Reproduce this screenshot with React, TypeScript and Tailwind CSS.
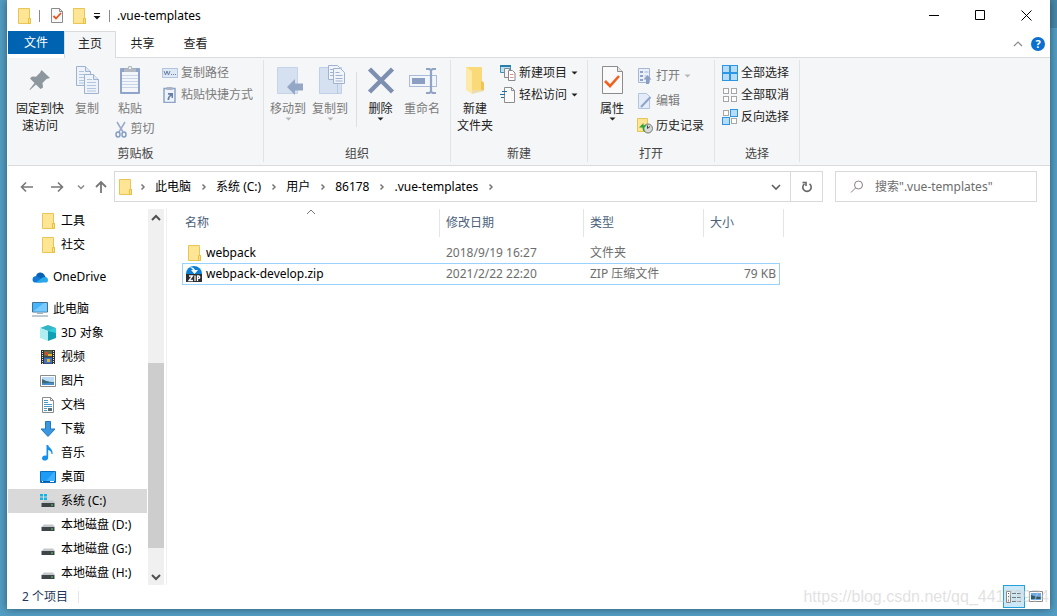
import React from 'react';

const FolderIcon = () => (
  <svg width="16" height="18" viewBox="0 0 16 18">
    <path d="M2.5 1.5h11v10h1v5h-12z" fill="#ffe594" stroke="#e8c555" />
    <path d="M12.5 11.5h2v5h-2z" fill="#ffe08a" stroke="#e8c040" />
  </svg>
);

const CheckDocIcon = () => (
  <svg width="14" height="17" viewBox="0 0 14 17">
    <path d="M1.5 1.5h8l3 3v11h-11z" fill="#f8f8f8" stroke="#8b8b8b" />
    <path d="M9.5 1.5v3h3" fill="none" stroke="#8b8b8b" />
    <path d="M3.5 9l2.5 2.5 5-5.500" fill="none" stroke="#e8541c" strokeWidth="1.800" />
  </svg>
);

const Caret = ({ color = '#222' }: { color?: string }) => (
  <svg width="7" height="4" viewBox="0 0 7 4">
    <path d="M0.5 0.5h6l-3 3z" fill={color} />
  </svg>
);

const Chevron = ({ d, w = 1.2, color = '#606060' }: { d: string; w?: number; color?: string }) => (
  <svg width="10" height="10" viewBox="0 0 10 10">
    <path d={d} fill="none" stroke={color} strokeWidth={w} />
  </svg>
);
const RIGHT = 'M3.5 2.5l2.500 2.500-2.500 2.500';
const UP = 'M1 7l4-4 4 4';
const DOWN = 'M1 3l4 4 4-4';

const PinIcon = () => (
  <svg width="32" height="32" viewBox="0 0 32 32">
    <path d="M17.5 6l8.5 8-3.5 1-4 4 .5 4.500-2.500 1.500-4.500-4.500-6 5.500-.5-.5 5-6.500-4.500-4.500 2-2 4 .2 4-4z" fill="#8c979e" />
  </svg>
);

const Page = ({ x, y }: { x: number; y: number }) => (
  <g transform={`translate(${x} ${y})`}>
    <path d="M.5.5h9l5 5v14h-14z" fill="#eef3fa" stroke="#9fb3d1" />
    <path d="M9.500.5v5h5" fill="#dfe8f4" stroke="#9fb3d1" />
    <path d="M3 5.500h5M3 8.500h9M3 11.500h9M3 14.500h9M3 17h9" stroke="#b3c4de" />
  </g>
);

const CopyIcon = () => (
  <svg width="32" height="32" viewBox="0 0 32 32">
    <Page x={5} y={2} />
    <Page x={13} y={10} />
  </svg>
);

const PasteIcon = () => (
  <svg width="32" height="32" viewBox="0 0 32 32">
    <rect x="6" y="4" width="20" height="26" rx="1" fill="#8fa4c8" />
    <rect x="8" y="8" width="16" height="20" fill="#f2f6fb" />
    <path d="M8 11.500h16M8 14.500h16M8 17.500h16M8 20.500h16M8 23.500h16" stroke="#c8d5e8" />
    <path d="M10 8V4.500h3.500L14.500 2h3l1 2.500H22V8z" fill="#b3b9c1" />
    <circle cx="16" cy="4" r="1" fill="#fff" />
  </svg>
);

const CutIcon = () => (
  <svg width="12" height="17" viewBox="0 0 12 17" fill="none">
    <path d="M2 1l6 10M10 1L4 11" stroke="#9badca" strokeWidth="1.600" />
    <ellipse cx="3" cy="13.500" rx="2" ry="2.500" stroke="#859dc4" strokeWidth="1.500" />
    <ellipse cx="9" cy="13.500" rx="2" ry="2.500" stroke="#859dc4" strokeWidth="1.500" />
  </svg>
);

const CopyPathIcon = () => (
  <svg width="16" height="16" viewBox="0 0 16 16">
    <rect x=".5" y="3.500" width="15" height="9" fill="#dfe8f5" stroke="#b4c4dd" />
    <path d="M2 6l1.500 4L5 6l1.500 4L8 6" fill="none" stroke="#6c81a8" />
    <path d="M9 9.500h1M11 9.500h1M13 9.500h1" stroke="#6c81a8" />
  </svg>
);

const PasteShortcutIcon = () => (
  <svg width="16" height="16" viewBox="0 0 16 16">
    <path d="M2 1.500h11v14H2z" fill="#eef3fa" stroke="#8fa4c8" strokeWidth="1.500" />
    <path d="M4.500 0h6v3h-6z" fill="#aab4c4" />
    <path d="M6 6h5v5H9.500V8.800C7.800 9.800 7.300 11 7.300 13H5.500c0-2.500 1-4 2.700-5.300H6z" fill="#647fac" />
  </svg>
);

const MoveIcon = () => (
  <svg width="32" height="32" viewBox="0 0 32 32">
    <path d="M5.500 3.500h20v26h-20z" fill="#d5e0f1" stroke="#c6d4ea" />
    <path d="M15 23l8-8v4.500h8v7h-8V31z" fill="#94a7c7" />
  </svg>
);

const CopyToIcon = () => (
  <svg width="32" height="32" viewBox="0 0 32 32">
    <path d="M5.500 3.500h22v26h-22z" fill="#d5e0f1" stroke="#c0cfe7" />
    <path d="M23.500 20v10" stroke="#b9c9e2" />
    <g transform="translate(14 1)" stroke="#9fb3d1" fill="#f1f5fb">
      <path d="M.5.5h9l2 2v12h-11z" />
      <path d="M2 4.500h6M2 7.500h6M2 10.500h6" />
      <path d="M5.500 3.500h7l4 4v11h-11z" />
      <path d="M7.500 7.500h4M7.500 10.500h7M7.500 13.500h7M7.500 16h7" />
    </g>
  </svg>
);

const DeleteIcon = () => (
  <svg width="32" height="32" viewBox="0 0 32 32">
    <path d="M4.500 5L16 16.500 27.500 28M27.500 5L4.500 28" stroke="#7d8fb1" strokeWidth="4.500" fill="none" />
  </svg>
);

const RenameIcon = () => (
  <svg width="32" height="32" viewBox="0 0 32 32">
    <rect x="3.500" y="11.500" width="27" height="11" fill="#f2f6fb" stroke="#a9bbd6" />
    <path d="M6 14h13v6H6z" fill="#8b9fc2" />
    <path d="M20 5h3.500l1.500 1.500L26.500 5H30M25 6v22M20 29h3.500l1.500-1.500 1.500 1.500H30" stroke="#91a4c5" strokeWidth="2.200" fill="none" />
  </svg>
);

const NewFolderIcon = () => (
  <svg width="32" height="32" viewBox="0 0 32 32">
    <path d="M7 3h16v14l2 2v7H11z" fill="#fad978" />
    <path d="M23 17l2 2v7h-3v-8z" fill="#f1c456" />
    <path d="M7 3l6 4v23l-6-4z" fill="#ffe9a6" />
    <path d="M13 26h12v1l-12 3z" fill="#ecdcae" />
  </svg>
);

const NewItemIcon = () => (
  <svg width="16" height="16" viewBox="0 0 16 16">
    <path d="M.5.5h10v7H.5z" fill="#b9e2f5" stroke="#3f8fb8" />
    <path d="M0 1h11" stroke="#2b7eaa" strokeWidth="2" />
    <path d="M4.500 3.500h5v9h-5z" fill="#f4f4f4" stroke="#888" />
    <path d="M8.500 5.500h4l2.500 2.500v7.500H8.500z" fill="#fff" stroke="#888" />
    <path d="M10 9.500h3.500M10 12.500h3.500" stroke="#df8d8d" />
  </svg>
);

const EasyAccessIcon = () => (
  <svg width="16" height="16" viewBox="0 0 16 16">
    <path d="M4.500.5h7l3 3v12h-10z" fill="#fafafa" stroke="#8c8c8c" />
    <path d="M11.500.5v3h3" fill="none" stroke="#8c8c8c" />
    <path d="M2 4.500h5M0 7.500h5M1 10.500h3" stroke="#1f6fad" />
  </svg>
);

const PropertiesIcon = () => (
  <svg width="32" height="32" viewBox="0 0 32 32">
    <path d="M6.500 2.500h15l5 5v22h-20z" fill="#fafafa" stroke="#8c8c8c" />
    <path d="M21.500 2.500v5h5" fill="#e4e4e4" stroke="#8c8c8c" />
    <path d="M9 17l5 5 9-10" fill="none" stroke="#f2601d" strokeWidth="2.600" />
  </svg>
);

const OpenIcon = () => (
  <svg width="16" height="16" viewBox="0 0 16 16">
    <path d="M1.500.5h11v14h-11z" fill="#e9f0f9" stroke="#a5b7d4" />
    <path d="M3 3h3v2H3zM3 7h3v2H3zM3 11h3v2H3z" fill="#8fa4c8" />
    <path d="M7.500 4h4M7.500 8h2" stroke="#a5b7d4" />
    <path d="M10.500 7L14.500 11.500h-2.500V16h-3v-4.500H6.500z" fill="#8b9fc2" />
  </svg>
);

const EditIcon = () => (
  <svg width="16" height="16" viewBox="0 0 16 16">
    <path d="M1.500.5h8l3 3v12h-11z" fill="#e3ecf8" stroke="#b3c4df" />
    <path d="M4 14l9.500-10" stroke="#8fa4c8" strokeWidth="2" />
  </svg>
);

const HistoryIcon = () => (
  <svg width="16" height="16" viewBox="0 0 16 16">
    <path d="M.5.5h10v13H.5z" fill="#ffe594" stroke="#e8c555" />
    <circle cx="11" cy="10.500" r="4.500" fill="#d7d9da" stroke="#777" />
    <path d="M10.500 7.500v3l2.500-2" stroke="#444" fill="none" />
    <path d="M2 9.500L6.500 5v2.500c2-.5 3 0 3.500.5-2.500 0-3.500 2-2 6-2-1-2.500-2-2.500-4.500z" fill="#2fa336" />
  </svg>
);

const squares = [[0, 0], [8, 0], [0, 8], [8, 8]];
const SelectIcon = ({ on }: { on: boolean[] }) => (
  <svg width="16" height="16" viewBox="0 0 16 16">
    {squares.map(([x, y], i) =>
      on[i] ? (
        <rect key={i} x={x + 0.5} y={y + 0.5} width="7" height="7" fill="#b8dcf8" stroke="#2c96e4" />
      ) : (
        <rect key={i} x={x + 1.5} y={y + 1.5} width="5" height="5" fill="#fff" stroke="#a6a6a6" />
      )
    )}
  </svg>
);

const OneDriveIcon = () => (
  <svg width="16" height="16" viewBox="0 0 16 16">
    <path d="M4 7.500A4.500 4.500 0 0 1 12.500 6L14 9l-8 3-5-1z" fill="#0a62b8" />
    <path d="M3 13.500a3.200 3.200 0 0 1 .5-6.300c1.500 0 2.500.5 4 1.500L13 12l-4 1.500z" fill="#1179d3" />
    <path d="M4 13.500L10.500 8.500c4-1.500 5.500.5 5.500 2.500s-1 2.500-2.500 2.500z" fill="#28a8ea" />
  </svg>
);

const PcIcon = () => (
  <svg width="16" height="16" viewBox="0 0 16 16">
    <path d="M.5 1.500h15v9.500H.5z" fill="#45b4fb" stroke="#44718f" />
    <path d="M1 10.500L12 2h3v8.500z" fill="#79cbff" />
    <path d="M5 12.500h6" stroke="#9db5c6" />
    <path d="M0 15h16" stroke="#8294a2" />
  </svg>
);

const CubeIcon = () => (
  <svg width="16" height="16" viewBox="0 0 16 16">
    <path d="M0 3l8-3 8 3-8 3z" fill="#33b5c8" />
    <path d="M0 3l8 3v10l-8-3z" fill="#b0eef2" />
    <path d="M16 3L8 6v10l8-3z" fill="#10a0b4" />
    <path d="M8 6l8-3v5z" fill="#2fd0de" />
  </svg>
);

const VideoIcon = () => (
  <svg width="16" height="16" viewBox="0 0 16 16">
    <path d="M1 1h14v14H1z" fill="#303030" />
    <path d="M4 1.500h8v6H4z" fill="#5a6f4a" />
    <path d="M4 8.500h8v6H4z" fill="#3f76c4" />
    <path d="M5 3h3v3H5z" fill="#d34a2f" />
    <path d="M8 5h4v2H8zM7 10h3v3H7z" fill="#e8b62c" />
    <path d="M2.500 2v13M13.500 2v13" stroke="#e6e6e6" strokeDasharray="1 1" />
  </svg>
);

const PictureIcon = () => (
  <svg width="16" height="16" viewBox="0 0 16 16">
    <path d="M.5 2.500h15v11H.5z" fill="#fff" stroke="#8a8a8a" />
    <path d="M2 4h12v8H2z" fill="#b9dcf4" />
    <path d="M2 6c3 1 5 3 12 3v3H2z" fill="#3b6b78" />
    <path d="M2 10c4 1 7-1 12 0v2H2z" fill="#4a8fc9" />
  </svg>
);

const DocIcon = () => (
  <svg width="16" height="16" viewBox="0 0 16 16">
    <path d="M2.500.5h8l3 3v12h-11z" fill="#fff" stroke="#8a8a8a" />
    <path d="M10.500.5v3h3" fill="none" stroke="#8a8a8a" />
    <path d="M4 3.500h4M4 5.500h4M4 7.500h8M4 9.500h8M4 11.500h3M4 13.500h3" stroke="#4b9cc9" />
    <path d="M8 11h4v3H8z" fill="#56707c" />
  </svg>
);

const DownloadIcon = () => (
  <svg width="16" height="16" viewBox="0 0 16 16">
    <path d="M5.500.5h5V8h4.500L8 15.500 1 8h4.500z" fill="#3b96e0" stroke="#1f78c4" />
  </svg>
);

const MusicIcon = () => (
  <svg width="16" height="16" viewBox="0 0 16 16">
    <path d="M6.500 0h1.700c.3 3 5 3.500 4.300 9h-1c0-2.500-1.500-3.500-3.300-4v7.500c0 4-6.200 4-6.200.8 0-2.300 2.500-3.300 4.500-2.500z" fill="#1491ec" />
  </svg>
);

const DesktopIcon = () => (
  <svg width="16" height="16" viewBox="0 0 16 16">
    <path d="M.5 2.500h15v11H.5z" fill="#1e9cf5" stroke="#0a6cbd" />
    <path d="M6 12L14 3h1v9z" fill="#3fb0ff" />
    <path d="M1 12.500h14" stroke="#0a5da6" />
    <path d="M2 12.500h1M10 12.500h4" stroke="#fff" />
  </svg>
);

const DriveIcon = ({ system }: { system?: boolean }) => (
  <svg width="16" height="16" viewBox="0 0 16 16">
    {system && <path d="M0 1h3v2.500H0zM4 1h3v2.500H4zM0 4.500h3V7H0zM4 4.500h3V7H4z" fill="#10b4e8" />}
    <path d="M4 7.500h9l2 2.500H1.500z" fill="#c4c7c9" />
    <path d="M1.500 10h13v4h-13z" fill="#3f4448" />
    <path d="M11 12h2" stroke="#4be05c" />
  </svg>
);

const ZipIcon = () => (
  <svg width="18" height="18" viewBox="0 0 18 18">
    <path d="M1 9a8 8 0 0 1 16 0z" fill="#0b7fd6" />
    <path d="M5 2.500q3.500-1 5 2.500h3L9.500 9 6 5h2Q7 3 5 2.500z" fill="#fff" />
    <path d="M1 9h16v8H1z" fill="#2a2e33" />
    <path d="M4 11h3.500L4 15.500h4M10 10.500v5.500M12.500 16v-5h1.500q1.500 1.200 0 2.400H12.500" fill="none" stroke="#fff" strokeWidth="1.300" />
  </svg>
);

interface BigButtonProps {
  icon: React.ReactNode;
  label: string;
  label2?: string;
  width: string;
  disabled?: boolean;
  caret?: boolean;
}

function BigButton({ icon, label, label2, width, disabled, caret }: BigButtonProps) {
  return (
    <button className={`flex flex-col items-center pt-1 leading-[17px] whitespace-nowrap ${width} ${disabled ? 'text-[#7b7b7b]' : 'text-[#222]'}`}>
      {icon}
      <span className="mt-1">{label}</span>
      {label2 && <span>{label2}</span>}
      {caret && <Caret color={disabled ? '#b5b5b5' : '#222'} />}
    </button>
  );
}

function SmallButton({ icon, label, disabled, caret }: Omit<BigButtonProps, 'width'>) {
  return (
    <button className={`flex items-center gap-[3px] h-[22px] whitespace-nowrap ${disabled ? 'text-[#7b7b7b]' : 'text-[#222]'}`}>
      {icon}
      <span>{label}</span>
      {caret && <span className="ml-px"><Caret color={disabled ? '#b5b5b5' : '#222'} /></span>}
    </button>
  );
}

function Group({ title, width, children }: { title: string; width: string; children: React.ReactNode }) {
  return (
    <section className={`flex flex-col shrink-0 border-r border-[#e1e3e5] ${width}`}>
      <div className="flex flex-1 items-start">{children}</div>
      <div className="text-center leading-4 text-[#444]">{title}</div>
    </section>
  );
}

const crumbs = ['此电脑', '系统 (C:)', '用户', '86178', '.vue-templates'];

const pcItems = [
  { name: '3D 对象', icon: <CubeIcon /> },
  { name: '视频', icon: <VideoIcon /> },
  { name: '图片', icon: <PictureIcon /> },
  { name: '文档', icon: <DocIcon /> },
  { name: '下载', icon: <DownloadIcon /> },
  { name: '音乐', icon: <MusicIcon /> },
  { name: '桌面', icon: <DesktopIcon /> },
  { name: '系统 (C:)', icon: <DriveIcon system />, active: true },
  { name: '本地磁盘 (D:)', icon: <DriveIcon /> },
  { name: '本地磁盘 (G:)', icon: <DriveIcon /> },
  { name: '本地磁盘 (H:)', icon: <DriveIcon /> },
];

interface NavItemProps {
  name: string;
  icon: React.ReactNode;
  active?: boolean;
  root?: boolean;
}

function NavItem({ name, icon, active, root }: NavItemProps) {
  return (
    <li>
      <button className={`flex items-center gap-[5px] w-full h-6 whitespace-nowrap ${root ? 'pl-6' : 'pl-8'} ${active ? 'bg-[#d9d9d9]' : ''}`}>
        {icon}
        <span>{name}</span>
      </button>
    </li>
  );
}

function TitleBar() {
  return (
    <header className="flex items-center h-[31px] pl-2 pr-px shrink-0">
      <FolderIcon />
      <span className="w-px h-3 bg-[#8a8a8a] ml-[7px]" />
      <button aria-label="属性" className="ml-2.5"><CheckDocIcon /></button>
      <button aria-label="新建文件夹" className="ml-[7px]"><FolderIcon /></button>
      <button aria-label="自定义快速访问工具栏" className="ml-1.5">
        <svg width="8" height="8" viewBox="0 0 8 8">
          <path d="M1 1.500h6" stroke="#111" />
          <path d="M.5 4h7L4 7.500z" fill="#111" />
        </svg>
      </button>
      <span className="w-px h-3 bg-[#8a8a8a] ml-2" />
      <h1 className="flex-1 ml-[7px]">.vue-templates</h1>
      <button aria-label="最小化" className="flex justify-center items-center w-[46px] h-full">
        <svg width="11" height="11" viewBox="0 0 11 11"><path d="M0 5.500h10" stroke="#000" /></svg>
      </button>
      <button aria-label="最大化" className="flex justify-center items-center w-[46px] h-full">
        <svg width="11" height="11" viewBox="0 0 11 11"><path d="M.5.5h9v9h-9z" fill="none" stroke="#000" /></svg>
      </button>
      <button aria-label="关闭" className="flex justify-center items-center w-[46px] h-full">
        <svg width="11" height="11" viewBox="0 0 11 11"><path d="M.5.5l10 10M10.500.5l-10 10" stroke="#000" /></svg>
      </button>
    </header>
  );
}

function Tabs() {
  return (
    <nav className="flex h-[27px] shrink-0 text-[#222]">
      <button className="w-14 h-[23px] bg-[#0063b1] text-white">文件</button>
      <div className="w-[52px] border-x border-t border-[#dadbdc] bg-[#f5f6f7]">
        <button className="w-full h-[23px]">主页</button>
      </div>
      <div className="flex flex-1 border-b border-[#dadbdc]">
        <button className="w-[53px] h-[25px]">共享</button>
        <button className="w-[53px] h-[25px]">查看</button>
        <div className="flex flex-1 justify-end items-center gap-2 pr-[5px]">
          <button aria-label="最小化功能区"><Chevron d={UP} color="#8a8a8a" /></button>
          <button aria-label="帮助" className="w-[14px] h-[14px] rounded-full bg-[#0a6fce] text-white font-bold text-[11px] leading-[14px]">?</button>
        </div>
      </div>
    </nav>
  );
}

function Ribbon() {
  return (
    <div className="flex h-[108px] shrink-0 pt-0.5 pb-[3px] bg-[#f5f6f7] border-b border-[#dadbdc]">
      <Group title="剪贴板" width="w-64">
        <BigButton icon={<PinIcon />} label="固定到快" label2="速访问" width="w-16" />
        <BigButton icon={<CopyIcon />} label="复制" width="w-[30px]" disabled />
        <div className="flex flex-col items-center w-14">
          <BigButton icon={<PasteIcon />} label="粘贴" width="w-14" disabled />
          <div className="pl-2.5 pt-px">
            <SmallButton icon={<CutIcon />} label="剪切" disabled />
          </div>
        </div>
        <div className="pt-0.5 pl-1">
          <SmallButton icon={<CopyPathIcon />} label="复制路径" disabled />
          <SmallButton icon={<PasteShortcutIcon />} label="粘贴快捷方式" disabled />
        </div>
      </Group>
      <Group title="组织" width="w-[187px]">
        <div className="flex pl-[3px]">
          <BigButton icon={<MoveIcon />} label="移动到" width="w-[42px]" disabled caret />
          <BigButton icon={<CopyToIcon />} label="复制到" width="w-[42px]" disabled caret />
          <span className="w-px h-[55px] mt-3 mx-[5px] bg-[#dcdee0]" />
          <BigButton icon={<DeleteIcon />} label="删除" width="w-[37px]" caret />
          <BigButton icon={<RenameIcon />} label="重命名" width="w-[46px]" disabled />
        </div>
      </Group>
      <Group title="新建" width="w-[137px]">
        <BigButton icon={<NewFolderIcon />} label="新建" label2="文件夹" width="w-12" />
        <div className="pt-0.5 pl-px">
          <SmallButton icon={<NewItemIcon />} label="新建项目" caret />
          <SmallButton icon={<EasyAccessIcon />} label="轻松访问" caret />
        </div>
      </Group>
      <Group title="打开" width="w-[127px]">
        <BigButton icon={<PropertiesIcon />} label="属性" width="w-12" caret />
        <div className="flex flex-col gap-[3px] pt-[5px] pl-px">
          <SmallButton icon={<OpenIcon />} label="打开" disabled caret />
          <SmallButton icon={<EditIcon />} label="编辑" disabled />
          <SmallButton icon={<HistoryIcon />} label="历史记录" />
        </div>
      </Group>
      <Group title="选择" width="w-[85px]">
        <div className="pt-0.5 pl-[7px]">
          <SmallButton icon={<SelectIcon on={[true, true, true, true]} />} label="全部选择" />
          <SmallButton icon={<SelectIcon on={[false, false, false, false]} />} label="全部取消" />
          <SmallButton icon={<SelectIcon on={[false, true, true, false]} />} label="反向选择" />
        </div>
      </Group>
    </div>
  );
}

function AddressBar() {
  return (
    <div className="flex items-center shrink-0 h-[42px] pl-3 pr-[13px] pb-px">
      <button aria-label="后退">
        <svg width="14" height="12" viewBox="0 0 14 12"><path d="M13 6H1.500M6 1.500L1.500 6 6 10.500" fill="none" stroke="#777" strokeWidth="1.600" /></svg>
      </button>
      <button aria-label="前进" className="ml-4">
        <svg width="14" height="12" viewBox="0 0 14 12"><path d="M1 6h11.500M8 1.500L12.500 6 8 10.500" fill="none" stroke="#777" strokeWidth="1.600" /></svg>
      </button>
      <button aria-label="最近浏览的位置" className="ml-3">
        <Chevron d="M2 3.500l3 3 3-3" w={1.5} color="#888" />
      </button>
      <button aria-label="上移" className="ml-2">
        <svg width="14" height="14" viewBox="0 0 14 14"><path d="M7 13V2M2 7l5-5 5 5" fill="none" stroke="#777" strokeWidth="1.800" /></svg>
      </button>
      <div className="flex flex-1 items-center h-[31px] ml-1.5 border border-[#d9d9d9] pl-0.5">
        <FolderIcon />
        <span className="ml-[5px] mr-[7px]"><Chevron d={RIGHT} w={1.5} color="#777" /></span>
        {crumbs.map((c) => (
          <div key={c} className="flex items-center gap-2 mr-[7px]">
            <button>{c}</button>
            <Chevron d={RIGHT} w={1.5} color="#777" />
          </div>
        ))}
        <button aria-label="上一个位置" className="ml-auto mr-[9px]"><Chevron d={DOWN} w={1.6} /></button>
        <button aria-label="刷新" className="flex justify-center items-center w-8 h-full border-l border-[#d9d9d9]">
          <svg width="12" height="12" viewBox="0 0 12 12">
            <path d="M8.500 2.800A4.200 4.200 0 1 1 3.500 2.800" fill="none" stroke="#666" strokeWidth="1.600" />
            <path d="M1.500 1.500H5V5" fill="none" stroke="#666" strokeWidth="1.600" />
          </svg>
        </button>
      </div>
      <label className="flex items-center w-[202px] h-[31px] ml-3 border border-[#d9d9d9] pl-3.5">
        <svg width="14" height="14" viewBox="0 0 14 14">
          <circle cx="8.500" cy="5" r="4" fill="none" stroke="#8a7f86" />
          <path d="M5.500 8L1 12.500" stroke="#8a7f86" />
        </svg>
        <input
          type="text"
          aria-label="搜索"
          placeholder={'搜索".vue-templates"'}
          className="flex-1 min-w-0 ml-[11px] outline-none placeholder:text-[#6d6d6d]"
        />
      </label>
    </div>
  );
}

function Sidebar() {
  return (
    <aside className="flex shrink-0 w-[159px] border-r border-[#f0f0f0]">
      <div className="w-[139px] pt-px text-black">
        <ul>
          <NavItem name="工具" icon={<FolderIcon />} />
          <NavItem name="社交" icon={<FolderIcon />} />
        </ul>
        <ul className="my-2">
          <NavItem name="OneDrive" icon={<OneDriveIcon />} root />
        </ul>
        <ul>
          <NavItem name="此电脑" icon={<PcIcon />} root />
          {pcItems.map((item) => (
            <NavItem key={item.name} {...item} />
          ))}
        </ul>
      </div>
      <div className="flex flex-col items-center w-4 ml-px mt-px bg-[#f0f0f0]">
        <button aria-label="向上滚动" className="h-[17px]"><Chevron d={UP} w={2} color="#505050" /></button>
        <div className="grow-[137]" />
        <div className="w-full grow-[185] bg-[#cdcdcd]" />
        <div className="grow-[20]" />
        <button aria-label="向下滚动" className="h-[17px]"><Chevron d={DOWN} w={2} color="#505050" /></button>
      </div>
    </aside>
  );
}

const heads = ['名称', '修改日期', '类型', '大小'];

function FileTable() {
  return (
    <main className="flex-1 pl-[15px]">
      <table className="table-fixed w-[602px] border-separate border-spacing-0 text-[#6d6d6d]">
        <colgroup>
          <col className="w-[258px]" />
          <col className="w-36" />
          <col className="w-[120px]" />
          <col className="w-[76px]" />
          <col className="w-1" />
        </colgroup>
        <thead>
          <tr className="h-[34px] align-top text-left text-[#4c607a]">
            {heads.map((h, i) => (
              <th key={h} className="p-0 pt-px font-normal">
                <div className={`relative h-7 leading-[27px] ${i === 0 ? 'pl-[3px]' : 'pl-1.5'} ${i < 3 ? 'border-r border-[#e5e5e5]' : ''}`}>
                  {h}
                  {i === 0 && (
                    <span className="absolute inset-x-0 -top-0.5 flex justify-center"><Chevron d={UP} w={1} color="#777" /></span>
                  )}
                </div>
              </th>
            ))}
            <td className="p-0 pt-px"><div className="h-7 border-r border-[#e5e5e5]" /></td>
          </tr>
        </thead>
        <tbody>
          <tr className="h-[21px]">
            <td className="p-0 pl-1">
              <div className="flex items-center gap-1 h-5 text-black"><FolderIcon />webpack</div>
            </td>
            <td className="p-0 pl-1.5">2018/9/19 16:27</td>
            <td className="p-0 pl-1.5">文件夹</td>
            <td className="p-0" />
            <td className="p-0" />
          </tr>
          <tr className="h-[22px]">
            <td className="p-0 pl-0.5 border-l border-y border-[#99d1ff]">
              <div className="flex items-center gap-[3px] h-5 text-black"><ZipIcon />webpack-develop.zip</div>
            </td>
            <td className="p-0 pl-1.5 border-y border-[#99d1ff]">2021/2/22 22:20</td>
            <td className="p-0 pl-1.5 border-y border-[#99d1ff]">ZIP 压缩文件</td>
            <td className="p-0 pr-[3px] text-right border-r border-y border-[#99d1ff]">79 KB</td>
            <td className="p-0" />
          </tr>
        </tbody>
      </table>
    </main>
  );
}

function StatusBar() {
  return (
    <footer className="relative flex items-center h-6 shrink-0 pl-3.5 pr-[7px] text-[#1e395b]">
      <span>2 个项目</span>
      <span className="w-px h-3 ml-2.5 bg-[#e5e5e5]" />
      <button aria-label="详细信息" className="flex justify-center items-center w-[22px] h-[23px] ml-auto mb-px bg-[#cce8f6] border border-[#26a0da]">
        <svg width="16" height="14" viewBox="0 0 16 14">
          <path d="M.5 1.500h4v11h-4z" fill="#fff" stroke="#8a8a8a" />
          <path d="M2.500 3v1M2.500 6v1" stroke="#555" />
          <path d="M2.500 9.500v2" stroke="#d33" />
          <path d="M6 3.500h4M11 3.500h4M6 7.500h4M11 7.500h4M6 11.500h4M11 11.500h4" stroke="#777" />
        </svg>
      </button>
      <button aria-label="大图标" className="ml-1">
        <svg width="14" height="12" viewBox="0 0 14 12">
          <path d="M.5.5h13v10H.5z" fill="#fff" stroke="#8a8a8a" />
          <path d="M2 2h10v7H2z" fill="#6fa8e6" />
          <path d="M2 4c3 1 6 2 10 2v2H2z" fill="#2e5a68" />
        </svg>
      </button>
      <div className="absolute right-px top-0.5 text-base leading-5 text-[#cdcdcd]/60 font-['Liberation_Sans',sans-serif] pointer-events-none">
        https://blog.csdn.net/qq_44173974
      </div>
    </footer>
  );
}

export default function App() {
  return (
    <div className="flex min-h-screen pl-[7px] bg-[#529dc3] text-xs font-['Noto_Sans','Noto_Sans_CJK_SC',sans-serif]">
      <div className="relative flex flex-col flex-1 mb-[7px] pl-px bg-white shadow-[0_0_8px_rgba(0,0,0,0.45)]">
        <TitleBar />
        <Tabs />
        <Ribbon />
        <div className="flex flex-col flex-1">
          <AddressBar />
          <div className="flex flex-1">
            <Sidebar />
            <FileTable />
          </div>
        </div>
        <StatusBar />
      </div>
      <div className="w-[7px]">
        <div className="h-7 bg-[#4787a8]" />
      </div>
    </div>
  );
}
